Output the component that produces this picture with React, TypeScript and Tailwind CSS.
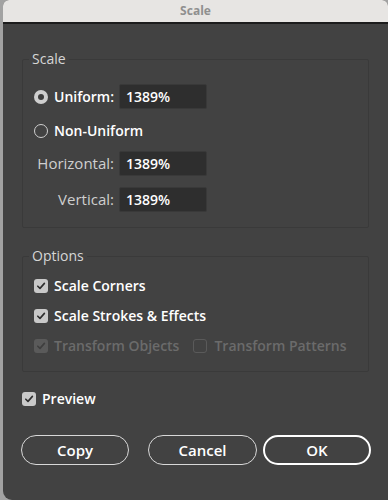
import { ReactNode } from 'react';

function Check({ disabled = false, checked = true }: { disabled?: boolean; checked?: boolean }) {
  return (
    <span
      className={`flex h-[14px] w-[14px] shrink-0 items-center justify-center rounded-[3px] ${
        disabled ? 'bg-[#5a5a5a]' : checked ? 'bg-[#c9c9c9]' : 'border border-[#5a5a5a] bg-transparent'
      }`}
    >
      {checked && (
        <svg width="10" height="10" viewBox="0 0 10 10">
          <path
            d="M1.8 5.2 L4 7.4 L8.4 2.4"
            fill="none"
            stroke={disabled ? '#3e3e3e' : '#2e2e2e'}
            strokeWidth="1.6"
            strokeLinecap="round"
            strokeLinejoin="round"
          />
        </svg>
      )}
    </span>
  );
}

function Radio({ selected = false }: { selected?: boolean }) {
  return selected ? (
    <span className="flex h-[14px] w-[14px] shrink-0 items-center justify-center rounded-full bg-[#cfcfcf]">
      <span className="h-[6px] w-[6px] rounded-full bg-[#3e3e3e]" />
    </span>
  ) : (
    <span className="h-[14px] w-[14px] shrink-0 rounded-full border border-[#cfcfcf]" />
  );
}

function Field({ value }: { value: string }) {
  return (
    <div className="flex h-[25px] w-[88px] items-center rounded-[2px] border border-[#393939] bg-[#2e2e2e] pl-[6px] text-[14px] font-semibold text-white">
      {value}
    </div>
  );
}

function Group({ title, children, className }: { title: string; children: ReactNode; className: string }) {
  return (
    <div className={`relative mx-[19px] rounded-[2px] border border-[#3a3a3a] ${className}`}>
      <span className="absolute left-[6px] top-[-10px] bg-[#424242] px-[3px] text-[14px] leading-[18px] text-[#d6d6d6]">
        {title}
      </span>
      {children}
    </div>
  );
}

export default function App() {
  return (
    <div className="flex h-[500px] w-[388px] bg-[#a2a2a2] pl-[3px]" style={{ fontFamily: '"Open Sans", "Noto Sans", sans-serif' }}>
      <div className="flex h-full flex-1 flex-col overflow-hidden rounded-t-[6px] rounded-bl-[9px] bg-[#424242]">
        {/* Title bar */}
        <div className="flex h-[24px] shrink-0 items-center justify-center border-b-2 border-[#1c1c1c] bg-[#e7e5e3]">
          <span className="text-[12px] font-bold text-[#8f8f8f]">Scale</span>
        </div>

        <div className="h-[35px] shrink-0" />

        <Group title="Scale" className="h-[169px] shrink-0 pt-[24px]">
          <div className="flex flex-col pl-[11px]">
            <div className="flex items-center gap-[6px]">
              <Radio selected />
              <span className="w-[59px] text-[14px] font-semibold text-white">Uniform:</span>
              <Field value="1389%" />
            </div>
            <div className="mt-[9px] flex h-[25px] items-center gap-[6px]">
              <Radio />
              <span className="text-[14px] font-semibold text-white">Non-Uniform</span>
            </div>
            <div className="mt-[8px] flex items-center gap-[5px]">
              <span className="w-[80px] text-right text-[15px] text-[#cfcfcf]">Horizontal:</span>
              <Field value="1389%" />
            </div>
            <div className="mt-[11px] flex items-center gap-[5px]">
              <span className="w-[80px] text-right text-[15px] text-[#cfcfcf]">Vertical:</span>
              <Field value="1389%" />
            </div>
          </div>
        </Group>

        <div className="h-[28px] shrink-0" />

        <Group title="Options" className="h-[116px] shrink-0 pt-[18px]">
          <div className="flex flex-col gap-[9px] pl-[11px]">
            <div className="flex items-center gap-[6px]">
              <Check />
              <span className="text-[14px] font-semibold leading-[21px] text-white">Scale Corners</span>
            </div>
            <div className="flex items-center gap-[6px]">
              <Check />
              <span className="text-[14px] font-semibold leading-[21px] text-white">Scale Strokes &amp; Effects</span>
            </div>
            <div className="flex items-center">
              <Check disabled />
              <span className="ml-[6px] text-[14px] font-semibold leading-[21px] text-[#6b6b6b]">Transform Objects</span>
              <span className="ml-[14px]">
                <Check checked={false} />
              </span>
              <span className="ml-[7px] text-[14px] font-semibold leading-[21px] text-[#6b6b6b]">Transform Patterns</span>
            </div>
          </div>
        </Group>

        <div className="mt-[16px] flex items-center gap-[6px] pl-[19px]">
          <Check />
          <span className="text-[14px] font-semibold leading-[21px] text-white">Preview</span>
        </div>

        <div className="mt-[26px] flex pl-[18px]">
          <button className="flex h-[30px] w-[108px] items-center justify-center rounded-full border border-[#d8d8d8] text-[15px] font-semibold text-white">
            Copy
          </button>
          <button className="ml-[19px] flex h-[30px] w-[109px] items-center justify-center rounded-full border border-[#d8d8d8] text-[15px] font-semibold text-white">
            Cancel
          </button>
          <button className="ml-[6px] flex h-[30px] w-[108px] items-center justify-center rounded-full border-2 border-white text-[15px] font-semibold text-white">
            OK
          </button>
        </div>
      </div>
    </div>
  );
}
